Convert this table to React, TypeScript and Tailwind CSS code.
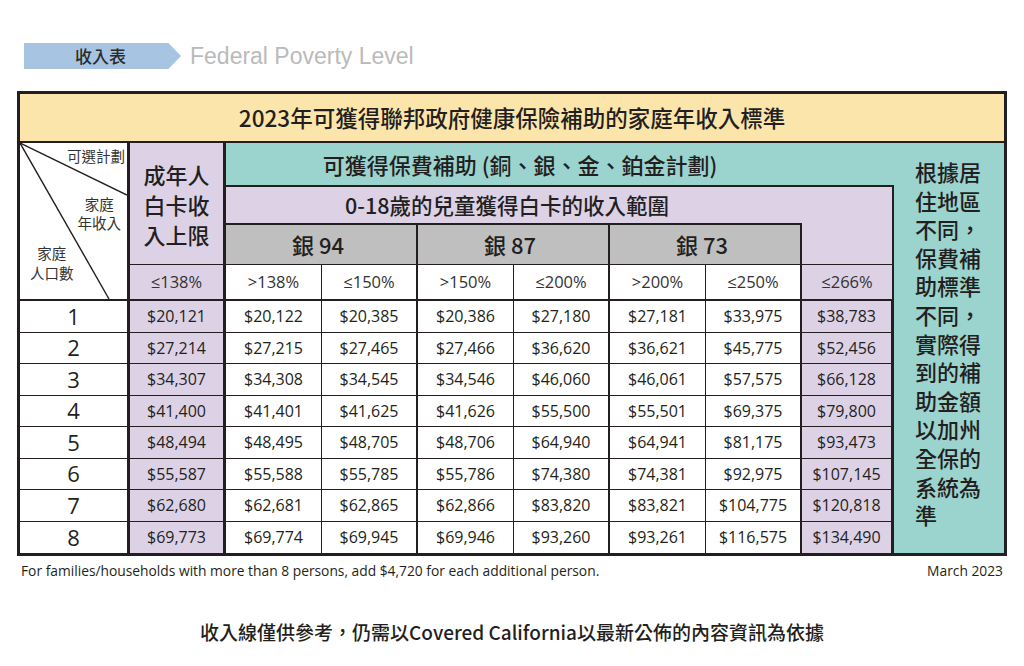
const cjk = "font-['Noto_Sans_CJK_TC','Noto_Sans',sans-serif]";
const num = "font-['Open_Sans','Noto_Sans',sans-serif]";

const rows = [
  ["1", "$20,121", "$20,122", "$20,385", "$20,386", "$27,180", "$27,181", "$33,975", "$38,783"],
  ["2", "$27,214", "$27,215", "$27,465", "$27,466", "$36,620", "$36,621", "$45,775", "$52,456"],
  ["3", "$34,307", "$34,308", "$34,545", "$34,546", "$46,060", "$46,061", "$57,575", "$66,128"],
  ["4", "$41,400", "$41,401", "$41,625", "$41,626", "$55,500", "$55,501", "$69,375", "$79,800"],
  ["5", "$48,494", "$48,495", "$48,705", "$48,706", "$64,940", "$64,941", "$81,175", "$93,473"],
  ["6", "$55,587", "$55,588", "$55,785", "$55,786", "$74,380", "$74,381", "$92,975", "$107,145"],
  ["7", "$62,680", "$62,681", "$62,865", "$62,866", "$83,820", "$83,821", "$104,775", "$120,818"],
  ["8", "$69,773", "$69,774", "$69,945", "$69,946", "$93,260", "$93,261", "$116,575", "$134,490"],
];

const percents = [">138%", "≤150%", ">150%", "≤200%", ">200%", "≤250%"];

const note = ["根據居", "住地區", "不同，", "保費補", "助標準", "不同，", "實際得", "到的補", "助金額", "以加州", "全保的", "系統為", "準"];

// thin divider after the first column of each silver band, thick after the second
const midBorder = (i: number) => (i % 2 === 0 ? "border-r" : "border-r-2");

export default function App() {
  return (
    <div className="w-[1024px] h-[666px] bg-white text-[#231f20] overflow-hidden">
      {/* Top label */}
      <div className="flex items-center mt-[43px] ml-[24px] h-[26px]">
        <div className="w-[157px] h-[26px] bg-[#a8c4e3] flex items-center justify-center pr-[4px] [clip-path:polygon(0_0,92%_0,100%_50%,92%_100%,0_100%)]">
          <span className={`${cjk} text-[17px] font-medium text-[#2b2b2b]`}>收入表</span>
        </div>
        <span className="ml-[9px] font-['Liberation_Sans',Arial,sans-serif] text-[23px] text-[#bababa] leading-none">
          Federal Poverty Level
        </span>
      </div>

      {/* Table */}
      <div className="mt-[22px] ml-[17px] w-[990px] border-[3px] border-[#231f20]">
        <div className="grid grid-cols-[110px_96px_96px_96px_96px_96px_96px_96px_92px_110px] grid-rows-[49px_44px_36px_42px_36px_repeat(8,31.5px)]">
          {/* Title */}
          <div className={`col-span-10 bg-[#fce5ab] border-b-2 border-[#231f20] flex items-center justify-center ${cjk} text-[22.5px] font-medium`}>
            2023年可獲得聯邦政府健康保險補助的家庭年收入標準
          </div>

          {/* Diagonal corner */}
          <div className={`row-span-4 relative bg-white border-r-[3px] border-b-2 border-[#231f20] ${cjk} text-[#333]`}>
            <svg className="absolute inset-0 w-full h-full" viewBox="0 0 107 156" preserveAspectRatio="none">
              <line x1="0" y1="0" x2="107" y2="52" stroke="#231f20" strokeWidth="1.4" />
              <line x1="0" y1="0" x2="89" y2="156" stroke="#231f20" strokeWidth="1.4" />
            </svg>
            <div className="absolute right-[2px] top-[3px] text-[14.5px] leading-[19px]">可選計劃</div>
            <div className="absolute right-[6px] top-[51px] text-[14.5px] leading-[19px] text-center">
              家庭
              <br />
              年收入
            </div>
            <div className="absolute left-[10px] top-[100px] text-[14.5px] leading-[20px] text-center">
              家庭
              <br />
              人口數
            </div>
          </div>

          {/* Adult white card header */}
          <div className={`row-span-3 bg-[#ddd1e6] border-r-[3px] border-b border-[#231f20] flex items-center justify-center text-center ${cjk} text-[22px] font-medium leading-[30px]`}>
            成年人
            <br />
            白卡收
            <br />
            入上限
          </div>

          {/* Subsidy band */}
          <div className={`col-span-7 bg-[#9bd3cf] border-b-2 border-[#231f20] flex items-center justify-center pr-[80px] ${cjk} text-[22px] font-medium`}>
            可獲得保費補助 (銅、銀、金、鉑金計劃)
          </div>

          {/* Right note column */}
          <div className={`row-span-12 bg-[#9bd3cf] flex flex-col items-center pt-[14px] ${cjk} text-[22px] font-medium`}>
            {note.map((l, i) => (
              <div key={i} className="h-[28.6px] leading-[28.6px] w-[68px] overflow-visible">
                {l}
              </div>
            ))}
          </div>

          {/* Children band */}
          <div className={`col-span-7 bg-[#ddd1e6] border-r-2 border-[#231f20] flex items-center justify-center pr-[104px] ${cjk} text-[21.5px] font-medium`}>
            0-18歲的兒童獲得白卡的收入範圍
          </div>

          {/* Silver plans */}
          {["銀 94", "銀 87", "銀 73"].map((s) => (
            <div
              key={s}
              className={`col-span-2 bg-[#bfbfbf] border-t-2 border-r-2 border-b border-[#231f20] flex items-center justify-center pr-[6px] ${cjk} text-[22px] font-medium`}
            >
              {s}
            </div>
          ))}
          <div className="bg-[#ddd1e6] border-r-2 border-b border-[#231f20]" />

          {/* Percent row */}
          <div className={`bg-[#ddd1e6] border-r-[3px] border-b-2 border-[#231f20] flex items-center justify-center ${num} text-[16.5px] text-[#333]`}>
            ≤138%
          </div>
          {percents.map((p, i) => (
            <div
              key={p + i}
              className={`bg-white ${midBorder(i)} border-b-2 border-[#231f20] flex items-center justify-center ${num} text-[16.5px] text-[#333]`}
            >
              {p}
            </div>
          ))}
          <div className={`bg-[#ddd1e6] border-r-2 border-b-2 border-[#231f20] flex items-center justify-center ${num} text-[16.5px] text-[#333]`}>
            ≤266%
          </div>

          {/* Data rows */}
          {rows.map((r, ri) => {
            const last = ri === rows.length - 1;
            const bb = last ? "" : "border-b";
            return [
              <div
                key={`n${ri}`}
                className={`bg-white border-r-[3px] ${bb} border-[#231f20] flex items-center justify-center ${num} text-[22px]`}
              >
                {r[0]}
              </div>,
              <div
                key={`a${ri}`}
                className={`bg-[#ddd1e6] border-r-[3px] ${bb} border-[#231f20] flex items-center justify-center ${num} text-[16px]`}
              >
                {r[1]}
              </div>,
              ...r.slice(2, 8).map((v, ci) => (
                <div
                  key={`c${ri}-${ci}`}
                  className={`bg-white ${midBorder(ci)} ${bb} border-[#231f20] flex items-center justify-center ${num} text-[16px]`}
                >
                  {v}
                </div>
              )),
              <div
                key={`z${ri}`}
                className={`bg-[#ddd1e6] border-r-[3px] ${bb} border-[#231f20] flex items-center justify-center ${num} text-[16px]`}
              >
                {r[8]}
              </div>,
            ];
          })}
        </div>
      </div>

      {/* Footnote */}
      <div className={`mt-[5px] ml-[21px] w-[982px] flex justify-between ${num} text-[13.8px] leading-[19px] text-[#231f20]`}>
        <span>For families/households with more than 8 persons, add $4,720 for each additional person.</span>
        <span>March 2023</span>
      </div>

      {/* Disclaimer */}
      <div className={`mt-[39px] text-center ${cjk} text-[19px] font-medium leading-[26px] text-[#231f20]`}>
        收入線僅供參考，仍需以Covered California以最新公佈的內容資訊為依據
      </div>
    </div>
  );
}
